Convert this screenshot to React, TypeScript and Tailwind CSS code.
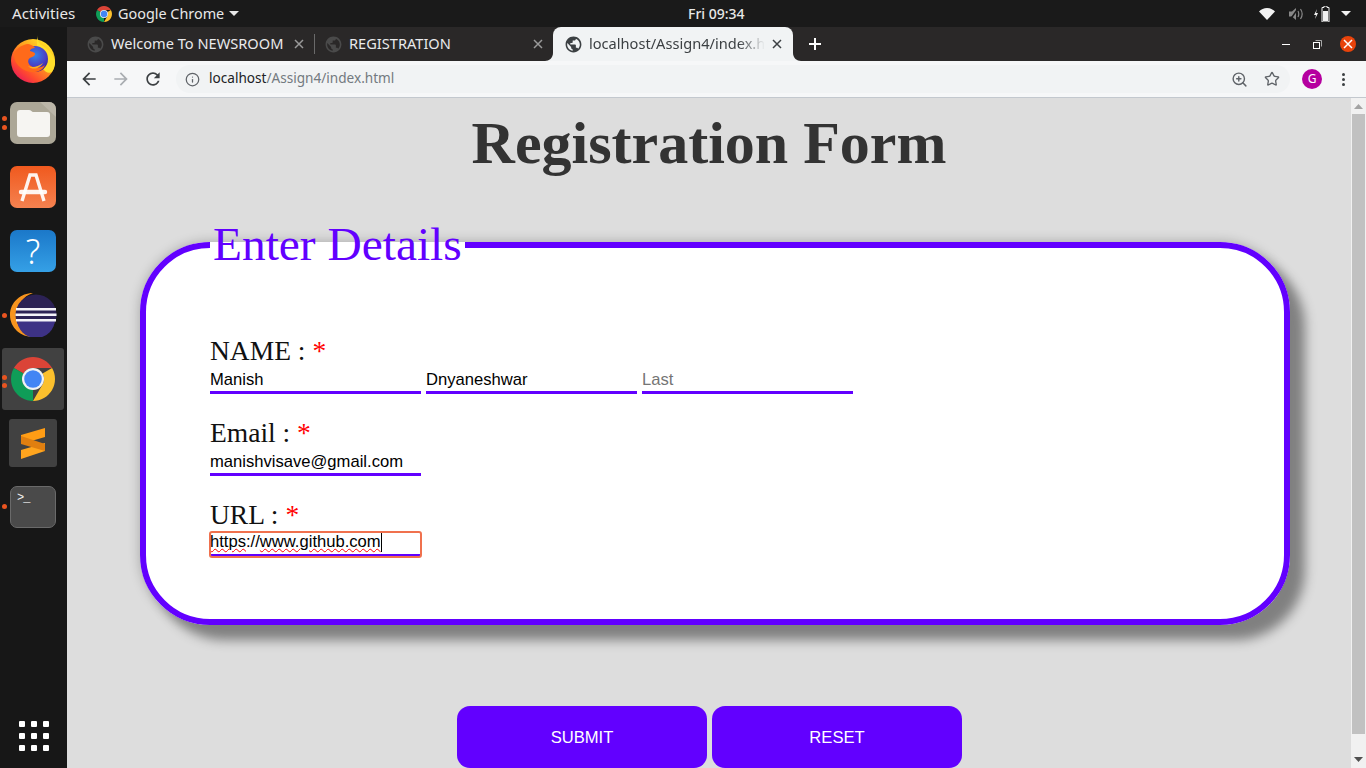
import { Info, Star, ZoomIn } from "lucide-react";

const ui = "font-['Noto_Sans',sans-serif]";
const GLOBE = "M12 2C6.48 2 2 6.48 2 12s4.48 10 10 10 10-4.48 10-10S17.52 2 12 2zm-1 17.93c-3.95-.49-7-3.85-7-7.93 0-.62.08-1.21.21-1.79L9 15v1c0 1.1.9 2 2 2v1.93zm6.9-2.54c-.26-.81-1-1.39-1.9-1.39h-1v-3c0-.55-.45-1-1-1H8v-2h2c.55 0 1-.45 1-1V7h2c1.1 0 2-.9 2-2v-.41c2.93 1.19 5 4.06 5 7.41 0 2.08-.8 3.97-2.1 5.39z";

function Globe({ color }: { color: string }) {
  return (
    <svg viewBox="0 0 24 24" width="19" height="19" fill={color} className="shrink-0">
      <path d={GLOBE} />
    </svg>
  );
}

function ChromeLogo({ size }: { size: number }) {
  return (
    <svg viewBox="4 4 40 40" width={size} height={size}>
      <path fill="#db4437" d="M6.68 14A20 20 0 0 1 41.32 14H24a10 10 0 0 0-8.66 5z" />
      <path fill="#fbc02d" d="M41.32 14A20 20 0 0 1 24 44L32.66 29A10 10 0 0 0 32.66 19z" />
      <path fill="#0f9d58" d="M24 44A20 20 0 0 1 6.68 14L15.34 19A10 10 0 0 0 15.34 29L24 34z" />
      <circle cx="24" cy="24" r="10" fill="#f1f3f4" />
      <circle cx="24" cy="24" r="8" fill="#4285f4" />
    </svg>
  );
}

function Firefox() {
  return (
    <svg viewBox="0 0 44 48" width="44" height="48">
      <defs>
        <linearGradient id="ffa" x1="0.85" y1="0.1" x2="0.15" y2="0.95">
          <stop offset="0" stopColor="#ffe226" />
          <stop offset="0.4" stopColor="#ff9a1f" />
          <stop offset="0.75" stopColor="#ff4a2e" />
          <stop offset="1" stopColor="#e8175d" />
        </linearGradient>
        <radialGradient id="ffb" cx="0.5" cy="0.35" r="0.65">
          <stop offset="0" stopColor="#2f86ea" />
          <stop offset="0.65" stopColor="#4a3fc4" />
          <stop offset="1" stopColor="#3a1f95" />
        </radialGradient>
      </defs>
      <circle cx="22" cy="26" r="22" fill="url(#ffa)" />
      <path fill="#ffdf2b" d="M27 0c-1 5 0 8 5 11 6 4 11 9 12 15 .5 4-1 8-3 11-6 3-11-4-12-12-1-7-5-13-2-25z" />
      <circle cx="24" cy="24" r="13" fill="url(#ffb)" />
      <path fill="#ff6a1a" d="M3 18c3-5 8-8 13-9 3 0 7 2 8 4-2 0-5 1-5 3 2 1 5 1 5 3s-3 3-5 4c-3 2-2 6 1 8 4 3 10 2 14-1-2 5-8 8-14 7C11 36 2 28 3 18z" />
      <path fill="#ffb01f" d="M17 31c4 2 10 1 15-3-3 5-10 8-15 3z" />
    </svg>
  );
}

function Dots({ ys }: { ys: number[] }) {
  return (
    <>
      {ys.map((y) => (
        <span key={y} className="absolute left-[2px] w-[5px] h-[5px] rounded-full bg-[#e95420]" style={{ top: y }} />
      ))}
    </>
  );
}

function DockItem({ children, ys = [], active = false }: { children: React.ReactNode; ys?: number[]; active?: boolean }) {
  return (
    <div className="relative h-16 pr-px flex items-center justify-center">
      {active && <div className="absolute left-[2px] top-[1px] w-[62px] h-[62px] rounded-[3px] bg-[#414141]" />}
      <div className="relative flex">{children}</div>
      <Dots ys={ys} />
    </div>
  );
}

function Dock() {
  return (
    <div className="w-[67px] shrink-0 bg-[#171717] flex flex-col">
      <DockItem><Firefox /></DockItem>
      <DockItem ys={[25, 34]}>
        <svg viewBox="0 0 46 42" width="46" height="42">
          <rect width="46" height="42" rx="7" fill="#aca797" />
          <path d="M30 0h9a7 7 0 0 1 7 7v8z" fill="#bbb6a8" />
          <path fill="#f6f5f2" d="M7 11a3 3 0 0 1 3-3h9c2 0 3 2 4 2h14a3 3 0 0 1 3 3v19a3 3 0 0 1-3 3H10a3 3 0 0 1-3-3z" />
        </svg>
      </DockItem>
      <DockItem>
        <svg viewBox="0 0 46 42" width="46" height="42">
          <defs>
            <linearGradient id="sw" x1="0" y1="0" x2="0" y2="1">
              <stop offset="0" stopColor="#f0591e" />
              <stop offset="1" stopColor="#f58250" />
            </linearGradient>
          </defs>
          <rect width="46" height="42" rx="7" fill="url(#sw)" />
          <path fill="none" stroke="#fff" strokeOpacity="0.92" strokeWidth="3.4" d="M12 35 L20 9 H26 L34 35" />
          <path fill="none" stroke="#fff" strokeOpacity="0.92" strokeWidth="4.4" strokeLinecap="round" d="M11 26 H35" />
        </svg>
      </DockItem>
      <DockItem>
        <div className="w-[46px] h-[42px] rounded-[7px] bg-gradient-to-b from-[#1b78c9] to-[#35a0e6] flex items-center justify-center text-white text-[34px] leading-none font-light font-['Noto_Sans',sans-serif]">?</div>
      </DockItem>
      <DockItem ys={[30]}>
        <svg viewBox="0 0 48 44" width="48" height="44">
          <path fill="#f7941e" d="M24 0C12 0 1 9 1 22s11 22 23 22C14 41 8 32 8 22S14 3 24 0z" />
          <circle cx="27" cy="22" r="20.5" fill="#2c2255" />
          <path fill="#3d3285" d="M8 26h38a19 19 0 0 1-38 0z" />
          <path fill="#f4f3f8" d="M7 15h40v2.4H7zM6.500 20.500h41v2.400h-41zM7 26h40v2.400H7z" />
        </svg>
      </DockItem>
      <DockItem active ys={[28, 36]}><ChromeLogo size={44} /></DockItem>
      <DockItem>
        <div className="w-12 h-12 rounded-[3px] bg-[#414141] flex items-center justify-center">
          <svg viewBox="0 0 24 32" width="24" height="32">
            <path fill="#ff9d15" d="M24 1v9L0 17V8z" />
            <path fill="#ffa51e" d="M0 23l24-7v8L0 32z" />
            <path fill="#e07f10" d="M0 9l24 8v7L0 17z" />
          </svg>
        </div>
      </DockItem>
      <DockItem ys={[29]}>
        <div className="w-[46px] h-[42px] rounded-[7px] bg-[#4a4a4a] border border-[#6a6a6a] text-[#f2f2f2] text-[12px] leading-none pl-[6px] pt-[5px] font-['Liberation_Mono',monospace] flex">
          <span className="-tracking-[1px]">&gt;_</span>
        </div>
      </DockItem>
      <div className="mt-auto pb-[17px] grid grid-cols-3 gap-[6px] w-[30px] self-center">
        {Array.from({ length: 9 }).map((_, i) => (
          <span key={i} className="w-[6px] h-[6px] rounded-[1px] bg-white" />
        ))}
      </div>
    </div>
  );
}

function TopBar() {
  return (
    <div className={`h-[27px] shrink-0 bg-[#1a1a1a] text-[#e8e8e8] text-[14.4px] flex items-center relative ${ui}`}>
      <span className="ml-3 w-[84px] text-[15.2px]">Activities</span>
      <ChromeLogo size={16} />
      <span className="ml-[6px]">Google Chrome</span>
      <svg width="10" height="5" viewBox="0 0 10 5" className="ml-[5px]"><path d="M0 0h10L5 5z" fill="#e8e8e8" /></svg>
      <span className="absolute left-[688px] text-[14px] font-medium">Fri 09:34</span>
      <div className="ml-auto flex items-center mr-[15px]">
        <svg width="16" height="12" viewBox="0 0 16 12"><path d="M0 3.500C2 1.500 5 0 8 0s6 1.500 8 3.500L8 12z" fill="#f2f2f2" /></svg>
        <svg width="15" height="14" viewBox="0 0 15 14" className="ml-[14px]" fill="none">
          <path d="M0 4.500h3L7 1v12L3 9.500H0z" fill="#888" />
          <path d="M9 4c1 2 1 4 0 6M11.500 2c2 3 2 7 0 10" stroke="#888" strokeWidth="1.200" />
          <path d="M1 13L10 0" stroke="#1a1a1a" strokeWidth="1.500" />
        </svg>
        <svg width="16" height="16" viewBox="0 0 16 16" className="ml-[10px]">
          <path d="M3 3L0 9h2l-1 4 3-6H2z" fill="#f2f2f2" />
          <path d="M10 0h3v1.500h2V16H8V1.500h2z" fill="none" stroke="#f2f2f2" strokeWidth="1" />
          <rect x="9" y="5" width="5" height="10" fill="#f2f2f2" />
        </svg>
        <svg width="10" height="5" viewBox="0 0 10 5" className="ml-[11px]"><path d="M0 0h10L5 5z" fill="#f2f2f2" /></svg>
      </div>
    </div>
  );
}

function X({ color }: { color: string }) {
  return (
    <svg width="10" height="10" viewBox="0 0 10 10" className="shrink-0">
      <path d="M1 1l8 8M9 1L1 9" stroke={color} strokeWidth="1.500" />
    </svg>
  );
}

function TabStrip() {
  return (
    <div className={`h-[34px] shrink-0 bg-[#2a2828] flex items-center text-[14.6px] leading-[20px] ${ui}`}>
      <div className="w-[240px] pl-[19px] flex items-center text-[#e9eaec] relative">
        <Globe color="#4a4a4a" />
        <span className="ml-[6px] -mt-[2px] whitespace-nowrap w-[183px]">Welcome To NEWSROOM</span>
        <X color="#9a9a9a" />
        <span className="absolute right-[-8px] w-px h-5 bg-[#6a6a6a]" />
      </div>
      <div className="w-[246px] pl-[17px] flex items-center text-[#e9eaec]">
        <Globe color="#4a4a4a" />
        <span className="ml-[6px] -mt-[2px] whitespace-nowrap w-[184px]">REGISTRATION</span>
        <X color="#9a9a9a" />
      </div>
      <div className="relative h-full w-[240px] bg-[#f1f3f4] rounded-t-[8px] flex items-center pl-[11px] text-[#3c4043]">
        <svg width="8" height="8" viewBox="0 0 8 8" className="absolute left-[-8px] bottom-0"><path d="M8 0v8H0c4 0 8-3 8-8z" fill="#f1f3f4" /></svg>
        <svg width="8" height="8" viewBox="0 0 8 8" className="absolute right-[-8px] bottom-0"><path d="M0 0v8H8C4 8 0 5 0 0z" fill="#f1f3f4" /></svg>
        <Globe color="#3c4043" />
        <span className="ml-[6px] -mt-[2px] w-[176px] overflow-hidden whitespace-nowrap [mask-image:linear-gradient(to_right,#000_85%,transparent)]">localhost/Assign4/index.html</span>
        <span className="ml-[7px] flex"><X color="#3c4043" /></span>
      </div>
      <svg width="12" height="12" viewBox="0 0 12 12" className="ml-4"><path d="M6 0v12M0 6h12" stroke="#fff" strokeWidth="2" /></svg>
      <div className="ml-auto flex items-center mr-[10px]">
        <span className="w-2 h-px bg-white" />
        <svg width="9" height="9" viewBox="0 0 9 9" className="ml-[23px]" fill="none" stroke="#fff"><rect x="0.500" y="2.500" width="6" height="6" /><path d="M2.500 .5h6v6" strokeOpacity="0.600" /></svg>
        <span className="ml-[18px] w-4 h-4 rounded-full bg-[#e8430b] flex items-center justify-center"><X color="#fff" /></span>
      </div>
    </div>
  );
}

function Toolbar() {
  return (
    <div className={`h-[37px] shrink-0 bg-[#f6f7f8] border-b border-[#c3c8ce] flex items-center ${ui}`}>
      <svg viewBox="0 0 24 24" width="20" height="20" className="ml-[12px]" fill="#3c4043"><path d="M20 11H7.830l5.590-5.590L12 4l-8 8 8 8 1.410-1.410L7.830 13H20v-2z" /></svg>
      <svg viewBox="0 0 24 24" width="20" height="20" className="ml-3 rotate-180" fill="#a9adb1"><path d="M20 11H7.830l5.590-5.590L12 4l-8 8 8 8 1.410-1.410L7.830 13H20v-2z" /></svg>
      <svg viewBox="0 0 24 24" width="20" height="20" className="ml-3" fill="#3c4043"><path d="M17.650 6.350C16.200 4.900 14.210 4 12 4c-4.420 0-7.990 3.580-7.990 8s3.570 8 7.990 8c3.730 0 6.840-2.550 7.730-6h-2.080c-.82 2.330-3.040 4-5.650 4-3.310 0-6-2.690-6-6s2.690-6 6-6c1.660 0 3.140.69 4.220 1.780L13 11h7V4l-2.350 2.350z" /></svg>
      <div className="ml-[13px] w-[1114px] h-[28px] rounded-full bg-[#f1f3f4] flex items-center pl-[9px] text-[13.6px]">
        <Info size={15} color="#5f6368" strokeWidth={2} />
        <span className="ml-[9px] -mt-[2px] text-[#202124]">localhost</span>
        <span className="-mt-[2px] text-[#737a80]">/Assign4/index.html</span>
        <ZoomIn size={17} color="#5f6368" strokeWidth={2} className="ml-auto mr-px" />
        <Star size={16} color="#5f6368" strokeWidth={2} className="ml-[15px] mr-[10px]" />
      </div>
      <div className="ml-[12px] w-5 h-5 rounded-full bg-[#b5009f] text-white text-[12px] flex items-center justify-center">G</div>
      <div className="ml-[20px] flex flex-col gap-[2px]">
        <span className="w-[3px] h-[3px] rounded-full bg-[#3c4043]" />
        <span className="w-[3px] h-[3px] rounded-full bg-[#3c4043]" />
        <span className="w-[3px] h-[3px] rounded-full bg-[#3c4043]" />
      </div>
    </div>
  );
}

const field = "block w-[211px] h-[26px] border-b-[3px] border-[#6200ff] bg-transparent outline-none text-[16.6px] text-black placeholder:text-[#757575] font-['Liberation_Sans',sans-serif]";
const label = "block mb-[1px] text-[27.500px] leading-[33px] text-[#111] font-['Liberation_Serif',serif]";
const star = "text-[#ff0000]";
const wavy = "underline decoration-wavy decoration-[#ff0000] decoration-[1px] underline-offset-[1px]";

function Form() {
  return (
    <fieldset className="ml-[73px] mt-[39px] w-[1150px] h-[408px] border-[6px] border-[#6200ff] rounded-[70px] bg-white shadow-[15px_15px_12px_#808080,0_0_12px_rgba(0,0,0,0.25)] pl-[64px] pt-[62px]">
      <legend className="px-[3px] text-[47.4px] leading-[55px] text-[#6200ff] font-['Liberation_Serif',serif]">Enter Details</legend>
      <label className={label}>NAME : <span className={star}>*</span></label>
      <div className="flex gap-[5px]">
        <input className={field} readOnly value="Manish" />
        <input className={field} readOnly value="Dnyaneshwar" />
        <input className={field} readOnly placeholder="Last" />
      </div>
      <label className={`${label} mt-[22px]`}>Email : <span className={star}>*</span></label>
      <input className={field} readOnly value="manishvisave@gmail.com" />
      <label className={`${label} mt-[22px]`}>URL : <span className={star}>*</span></label>
      <div className="mt-[1px] w-[211px] h-[25px] border-b-[3px] border-[#6200ff] rounded-[2px] outline-2 outline-offset-[-1px] outline-[#f0714e] text-[16.6px] text-black flex items-start font-['Liberation_Sans',sans-serif] leading-[21px]">
        <span className="-mt-[1px] border-r border-black whitespace-pre"><span className={wavy}>https</span>://<span className={wavy}>www.github.com</span></span>
      </div>
    </fieldset>
  );
}

function Page() {
  return (
    <div className="flex-1 min-h-0 flex bg-[#dddddd]">
      <div className="flex-1 min-w-0 overflow-hidden">
        <h1 className="mt-[11px] text-center text-[60px] leading-[69px] font-bold text-[#333] font-['Liberation_Serif',serif]">Registration Form</h1>
        <Form />
        <div className="mt-[81px] flex justify-center gap-[5px] pl-[1px]">
          <button className="w-[250px] h-[62px] pt-[2px] rounded-[13px] bg-[#6200ff] text-white text-[16.6px] font-['Liberation_Sans',sans-serif]">SUBMIT</button>
          <button className="w-[250px] h-[62px] pt-[2px] rounded-[13px] bg-[#6200ff] text-white text-[16.6px] font-['Liberation_Sans',sans-serif]">RESET</button>
        </div>
      </div>
      <div className="w-[15px] shrink-0 bg-[#f1f1f1] flex flex-col items-center">
        <svg width="9" height="5" viewBox="0 0 9 5" className="mt-[6px]"><path d="M0 5h9L4.500 0z" fill="#a3a3a3" /></svg>
        <div className="mt-[5px] w-[13px] h-[620px] bg-[#c1c1c1]" />
        <svg width="9" height="5" viewBox="0 0 9 5" className="mt-auto mb-[6px]"><path d="M0 0h9L4.500 5z" fill="#505050" /></svg>
      </div>
    </div>
  );
}

export default function App() {
  return (
    <div className="w-[1366px] h-[768px] overflow-hidden flex flex-col bg-[#171717]">
      <TopBar />
      <div className="flex-1 min-h-0 flex">
        <Dock />
        <div className="flex-1 min-w-0 flex flex-col">
          <TabStrip />
          <Toolbar />
          <Page />
        </div>
      </div>
    </div>
  );
}
